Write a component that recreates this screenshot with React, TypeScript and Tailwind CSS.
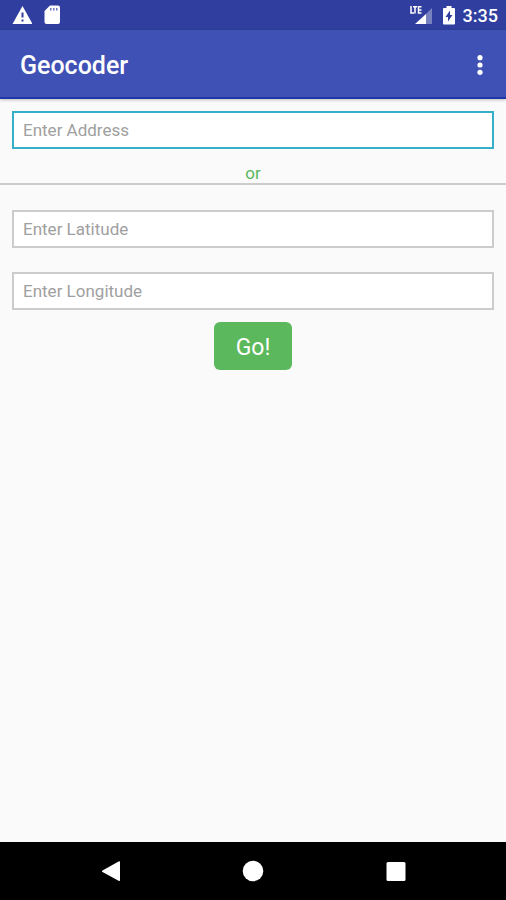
import { useState, type FormEvent } from "react";

function StatusBar() {
  return (
    <div className="flex h-[30px] items-center justify-between bg-[#303f9f] pr-2 pl-3 text-white">
      <div className="flex items-center gap-3">
        <svg width="20" height="18" viewBox="0 0 20 18" aria-hidden="true">
          <path d="M10.500 0 20.500 18H.5Z" fill="currentColor" />
          <path d="M9.500 6.500h2v5h-2zM9.500 13.500h2v2h-2z" fill="#303f9f" />
        </svg>
        <svg width="16" height="20" viewBox="0 0 16 20" aria-hidden="true">
          <path d="M6 .5h8a2 2 0 0 1 2 2V17a2 2 0 0 1-2 2H2.500a2 2 0 0 1-2-2V6Z" fill="currentColor" />
          <path d="M6 3h1.500v2.500H6zM9 3h1.500v2.500H9zM12 3h1.500v2.500H12z" fill="#303f9f" opacity="0.7" />
        </svg>
      </div>
      <div className="flex items-center">
        <svg width="23" height="20" viewBox="0 0 23 20" aria-hidden="true">
          <path d="M22 3v16h-6V9Z" fill="currentColor" opacity="0.35" />
          <path d="M5 19 16 9v10Z" fill="currentColor" />
          <path
            d="M1 1v7h3M3 1.700h4M5 1.700V8.500M11.500 1.700H8.500V8h3M8.500 5h3"
            fill="none"
            stroke="currentColor"
            strokeWidth="1.500"
          />
        </svg>
        <svg className="ml-2.5" width="12" height="20" viewBox="0 0 12 20" aria-hidden="true">
          <path
            d="M3.500 1h5v2H11a1 1 0 0 1 1 1v14.500a1 1 0 0 1-1 1H1a1 1 0 0 1-1-1V4a1 1 0 0 1 1-1h2.500Z"
            fill="currentColor"
          />
          <path d="M7 5.500v4.500h2.500L5 16.500V12H2.500Z" fill="#303f9f" />
        </svg>
        <span className="ml-2 pt-0.5 text-lg leading-6 font-medium">3:35</span>
      </div>
    </div>
  );
}

function AppBar() {
  return (
    <header className="relative flex h-[69px] items-center justify-between border-b-2 border-[#1f35a8] bg-[#3f51b5] pt-1 pr-2.5 pl-5 text-white shadow-[0_1px_3px_rgba(0,0,0,0.25)]">
      <h1 className="text-[25px] font-medium">Geocoder</h1>
      <button type="button" aria-label="More options" className="flex h-10 w-8 items-center justify-center">
        <svg width="6" height="22" viewBox="0 0 6 22" fill="currentColor" aria-hidden="true">
          <circle cx="3" cy="2.700" r="2.600" />
          <circle cx="3" cy="10" r="2.600" />
          <circle cx="3" cy="17.300" r="2.600" />
        </svg>
      </button>
    </header>
  );
}

type FieldProps = {
  label: string;
  value: string;
  active?: boolean;
  onChange: (value: string) => void;
};

function Field({ label, value, active, onChange }: FieldProps) {
  return (
    <div className="px-3">
      <input
        type="text"
        aria-label={label}
        placeholder={label}
        value={value}
        onChange={(event) => onChange(event.target.value)}
        className={`block h-[38px] w-full border-2 bg-white px-[9px] text-[17px] text-zinc-800 outline-none placeholder:text-[#a0a0a0] ${
          active ? "border-[#35b0c8]" : "border-[#cccccc]"
        }`}
      />
    </div>
  );
}

function NavBar() {
  return (
    <nav className="flex h-[58px] items-center justify-between bg-black px-[86px] text-white">
      <button type="button" aria-label="Back" className="flex size-12 items-center justify-center">
        <svg width="20" height="20" viewBox="0 0 20 20" fill="currentColor" aria-hidden="true">
          <path d="M19 0.300a.8.8 0 0 1 1 .8v18a.8.8 0 0 1-1 .8L2.500 11a1 1 0 0 1 0-1.600Z" />
        </svg>
      </button>
      <button type="button" aria-label="Home" className="flex size-12 items-center justify-center">
        <svg width="22" height="22" viewBox="0 0 22 22" fill="currentColor" aria-hidden="true">
          <circle cx="11" cy="11" r="10.300" />
        </svg>
      </button>
      <button type="button" aria-label="Recent apps" className="flex size-12 items-center justify-center">
        <svg width="20" height="20" viewBox="0 0 20 20" fill="currentColor" aria-hidden="true">
          <rect x="0.500" y="1" width="19" height="19" rx="1.500" />
        </svg>
      </button>
    </nav>
  );
}

export default function App() {
  const [address, setAddress] = useState("");
  const [latitude, setLatitude] = useState("");
  const [longitude, setLongitude] = useState("");

  function handleSubmit(event: FormEvent) {
    event.preventDefault();
  }

  return (
    <div className="flex min-h-screen flex-col bg-[#fafafa] font-[Roboto,sans-serif]">
      <StatusBar />
      <AppBar />
      <main className="flex-1 pt-3">
        <form onSubmit={handleSubmit}>
          <Field label="Enter Address" value={address} active onChange={setAddress} />
          <p className="mt-3.5 border-b-2 border-[#cccccc] text-center text-[17px] leading-5 text-[#5cb85c]">
            or
          </p>
          <div className="mt-[25px] flex flex-col gap-6">
            <Field label="Enter Latitude" value={latitude} onChange={setLatitude} />
            <Field label="Enter Longitude" value={longitude} onChange={setLongitude} />
          </div>
          <div className="mt-3 flex justify-center">
            <button type="submit" className="h-12 rounded-md bg-[#5cb85c] px-[22px] pt-1 text-[23px] text-white">
              Go!
            </button>
          </div>
        </form>
      </main>
      <NavBar />
    </div>
  );
}
